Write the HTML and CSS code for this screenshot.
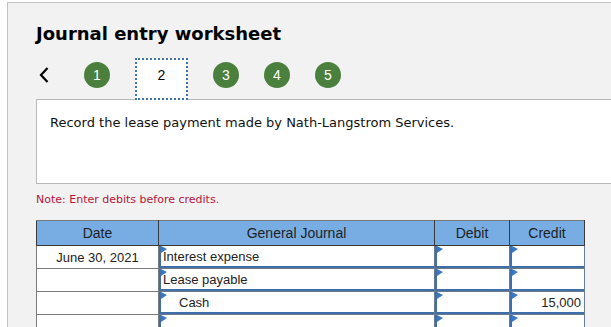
FILE: index.html
```html
<!DOCTYPE html>
<html>
<head>
  <title>Journal entry worksheet</title>
  <link rel="stylesheet" href="styles.css">
</head>
<body>
  <div class="panel">
    <h1 class="title">Journal entry worksheet</h1>

    <div class="steps">
      <svg class="prev" width="10" height="16" viewBox="0 0 10 16">
        <polyline points="8.5,1 2,8 8.5,15" fill="none" stroke="#000" stroke-width="2.2"/>
      </svg>
      <span class="step">1</span>
      <span class="step current">2</span>
      <span class="step">3</span>
      <span class="step">4</span>
      <span class="step">5</span>
    </div>

    <div class="prompt">Record the lease payment made by Nath-Langstrom Services.</div>

    <p class="note">Note: Enter debits before credits.</p>

    <table class="journal">
      <thead>
        <tr>
          <th class="c-date">Date</th>
          <th class="c-acct">General Journal</th>
          <th class="c-amt">Debit</th>
          <th class="c-amt">Credit</th>
        </tr>
      </thead>
      <tbody>
        <tr>
          <td class="date">June 30, 2021</td>
          <td class="entry"><div class="field">Interest expense</div></td>
          <td class="entry"><div class="field"></div></td>
          <td class="entry"><div class="field"></div></td>
        </tr>
        <tr>
          <td class="date"></td>
          <td class="entry"><div class="field">Lease payable</div></td>
          <td class="entry"><div class="field"></div></td>
          <td class="entry"><div class="field"></div></td>
        </tr>
        <tr>
          <td class="date"></td>
          <td class="entry"><div class="field indent">Cash</div></td>
          <td class="entry"><div class="field"></div></td>
          <td class="entry"><div class="field num">15,000</div></td>
        </tr>
        <tr>
          <td class="date"></td>
          <td class="entry"><div class="field"></div></td>
          <td class="entry"><div class="field"></div></td>
          <td class="entry"><div class="field"></div></td>
        </tr>
      </tbody>
    </table>
  </div>
</body>
</html>
```

FILE: styles.css
```css
html, body { margin: 0; padding: 0; overflow: hidden; background: #fff; }
.panel { margin: 2px 0 0 7px; width: 700px; height: 400px; padding-left: 28px; background: #f2f2f2; border: 1px solid #c4c4c4; border-right: none; box-sizing: border-box; font-family: "DejaVu Sans", Verdana, sans-serif; }
.title { margin: 20px 0 0; font-size: 18px; line-height: 21px; font-weight: bold; color: #000; }
.steps { display: flex; align-items: flex-start; gap: 25px; height: 41px; margin-top: 14px; }
.prev { flex: none; margin: 9px 10px 0 3px; }
.step { flex: none; width: 26px; height: 26px; margin-top: 4px; border-radius: 50%; background: #4a7f3e; color: #fff; font: 14px/26px "Liberation Sans", Arial, sans-serif; text-align: center; }
.step.current { position: relative; z-index: 1; width: 53px; height: 42px; margin-top: 0; padding-top: 6px; border: 2px dotted #3c73b8; border-radius: 0; background: #fff; color: #000; line-height: 18px; box-sizing: border-box; }
.prompt { height: 85px; padding: 15px 0 0 13px; background: #fff; border: 1px solid #b9b9b9; border-right: none; box-sizing: border-box; font-size: 13px; line-height: 15px; color: #111; }
.note { margin: 9px 0 0; font-size: 11px; line-height: 13px; color: #b8123a; }
.journal { margin-top: 14px; border-collapse: collapse; font: 13px "Liberation Sans", Arial, sans-serif; color: #222; }
.journal th { height: 25px; padding: 0; background: #78ade4; border: 1px solid #3a3a3a; border-top-color: #777; font-size: 14px; font-weight: normal; color: #1e1e1e; box-sizing: border-box; }
.c-date { width: 122px; }
.c-acct { width: 276px; }
.c-amt { width: 75px; }
.journal td { height: 23px; padding: 0; background: #fff; border: 1px solid #7b7b7b; box-sizing: border-box; }
.date { text-align: center; }
.journal td.entry { border-color: #6c7c90; }
.field { position: relative; height: 22px; padding: 2px 0 0 2px; border-left: 2px solid #3f6ea9; border-bottom: 2px solid #3f6ea9; box-sizing: border-box; line-height: 17px; white-space: nowrap; }
.field::before { content: ""; position: absolute; left: 0; top: 0; border-left: 6px solid #3a78c6; border-top: 3px solid transparent; border-bottom: 4px solid transparent; }
.indent { padding-left: 18px; }
.num { padding-right: 3px; text-align: right; }
```
